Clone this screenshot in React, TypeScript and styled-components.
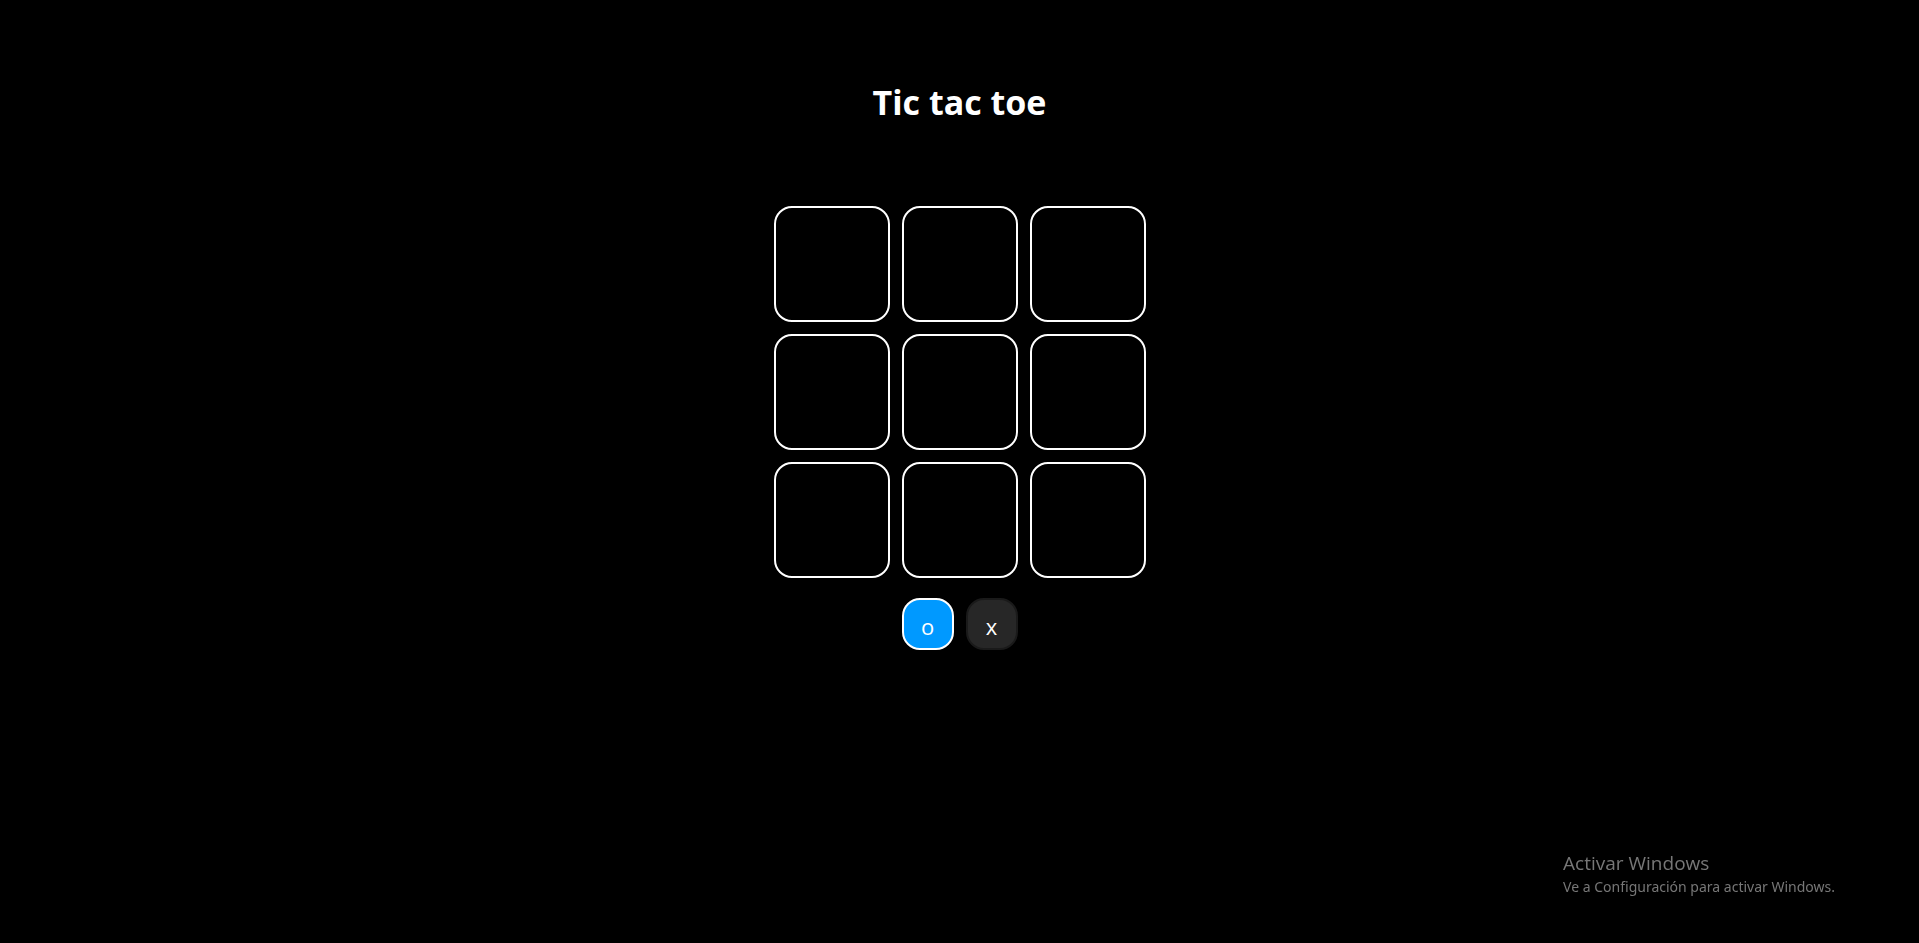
import React, { useState } from "react";
import styled, { createGlobalStyle } from "styled-components";

const GlobalStyle = createGlobalStyle`
  body {
    margin: 0;
    background: #000;
    color: #fff;
    font-family: "Open Sans", "Noto Sans", sans-serif;
  }
`;

const Page = styled.main`
  box-sizing: border-box;
  min-height: 100vh;
  display: flex;
  flex-direction: column;
  align-items: center;
  padding-top: 78px;
`;

const Title = styled.h1`
  margin: 0 0 80px;
  font-size: 34px;
  line-height: 48px;
  font-weight: 700;
`;

const Board = styled.section`
  display: grid;
  grid-template-columns: repeat(3, 116px);
  grid-auto-rows: 116px;
  gap: 12px;
`;

const Square = styled.button`
  padding: 0;
  border: 2px solid #fff;
  border-radius: 18px;
  background: transparent;
  color: inherit;
  font: inherit;
  font-size: 48px;
  cursor: pointer;
`;

const Turns = styled.div`
  display: flex;
  gap: 12px;
  margin-top: 20px;
`;

const Turn = styled.span<{ $active: boolean }>`
  box-sizing: border-box;
  display: grid;
  place-items: center;
  width: 52px;
  height: 52px;
  padding-top: 4px;
  border: 2px solid ${(p) => (p.$active ? "#fff" : "#1a1a1a")};
  border-radius: 18px;
  background: ${(p) => (p.$active ? "#09f" : "#272727")};
  font-size: 22px;
  line-height: 32px;
`;

const Notice = styled.aside`
  position: fixed;
  right: 84px;
  bottom: 46px;
  color: #777;
`;

const NoticeTitle = styled.p`
  margin: 0;
  font-size: 19px;
  line-height: 28px;
`;

const NoticeText = styled.p`
  margin: 0;
  font-family: "Noto Sans", "Open Sans", sans-serif;
  font-size: 14px;
  line-height: 20px;
`;

type Mark = "o" | "x";

export default function App() {
  const [cells, setCells] = useState<(Mark | null)[]>(Array(9).fill(null));
  const [turn, setTurn] = useState<Mark>("o");

  const play = (index: number) => {
    if (cells[index]) return;
    setCells(cells.map((cell, i) => (i === index ? turn : cell)));
    setTurn(turn === "o" ? "x" : "o");
  };

  return (
    <Page>
      <GlobalStyle />
      <Title>Tic tac toe</Title>
      <Board aria-label="Board">
        {cells.map((cell, i) => (
          <Square key={i} aria-label={`Square ${i + 1}`} onClick={() => play(i)}>
            {cell}
          </Square>
        ))}
      </Board>
      <Turns>
        <Turn $active={turn === "o"}>o</Turn>
        <Turn $active={turn === "x"}>x</Turn>
      </Turns>
      <Notice>
        <NoticeTitle>Activar Windows</NoticeTitle>
        <NoticeText>Ve a Configuración para activar Windows.</NoticeText>
      </Notice>
    </Page>
  );
}
